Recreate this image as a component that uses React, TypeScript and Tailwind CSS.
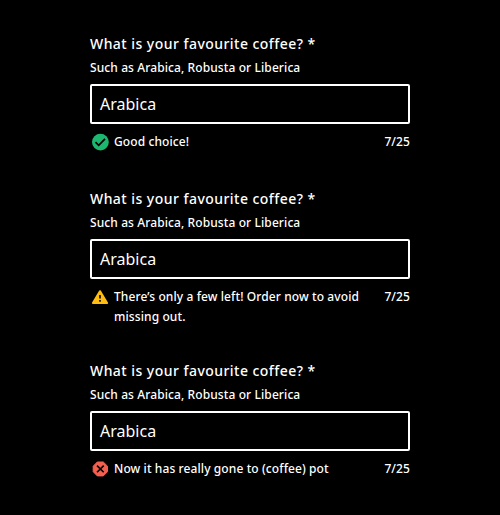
import React from 'react';

type Status = 'success' | 'warning' | 'error';

function StatusIcon({ status }: { status: Status }) {
  if (status === 'success') {
    return (
      <svg viewBox="0 0 20 20" className="h-5 w-5 shrink-0">
        <circle cx="10.4" cy="10.1" r="8.4" fill="#1db870" />
        <path d="M5.5 10.2l3.2 3.2 6.3-6.5" fill="none" stroke="#000" strokeWidth="1.7" />
      </svg>
    );
  }
  if (status === 'warning') {
    return (
      <svg viewBox="0 0 20 20" className="h-5 w-5 shrink-0">
        <path d="M10 4.3L17 16H3L10 4.3Z" fill="#ffbc11" stroke="#ffbc11" strokeWidth="2.2" strokeLinejoin="round" />
        <path d="M9.2 8h1.6v3.5H9.2zM9.2 13h1.6v1.8H9.2z" fill="#000" />
      </svg>
    );
  }
  return (
    <svg viewBox="0 0 20 20" className="h-5 w-5 shrink-0">
      <path d="M7.3 3h6l4.2 4.2v5.5l-4.2 4.2h-6L3.2 12.7V7.2z" fill="#f4604f" stroke="#f4604f" strokeLinejoin="round" />
      <path d="M7 6.6l6.7 6.7M13.7 6.6L7 13.3" stroke="#000" strokeWidth="1.6" />
    </svg>
  );
}

function Field({ status, message }: { status: Status; message: string }) {
  return (
    <div className="flex w-80 flex-col">
      <label className="text-sm leading-5 font-medium tracking-[0.46px]">What is your favourite coffee? *</label>
      <p className="mt-1 text-xs leading-5 font-medium tracking-[0.1px]">Such as Arabica, Robusta or Liberica</p>
      <div className="mt-1.5 flex h-10 items-center rounded-xs border-2 border-white px-2 text-base">Arabica</div>
      <div className="mt-2 flex items-start text-xs leading-5 font-medium tracking-[0.1px]">
        <StatusIcon status={status} />
        <span className="ml-1 w-[256px]">{message}</span>
        <span className="ml-auto">7/25</span>
      </div>
    </div>
  );
}

export default function App() {
  return (
    <main className="flex h-[515px] w-[500px] flex-col items-center bg-black pt-[34px] font-['Noto_Sans',sans-serif] text-white">
      <Field status="success" message="Good choice!" />
      <div className="mt-[37px]">
        <Field status="warning" message="There’s only a few left! Order now to avoid missing out." />
      </div>
      <div className="mt-[34px]">
        <Field status="error" message="Now it has really gone to (coffee) pot" />
      </div>
    </main>
  );
}
